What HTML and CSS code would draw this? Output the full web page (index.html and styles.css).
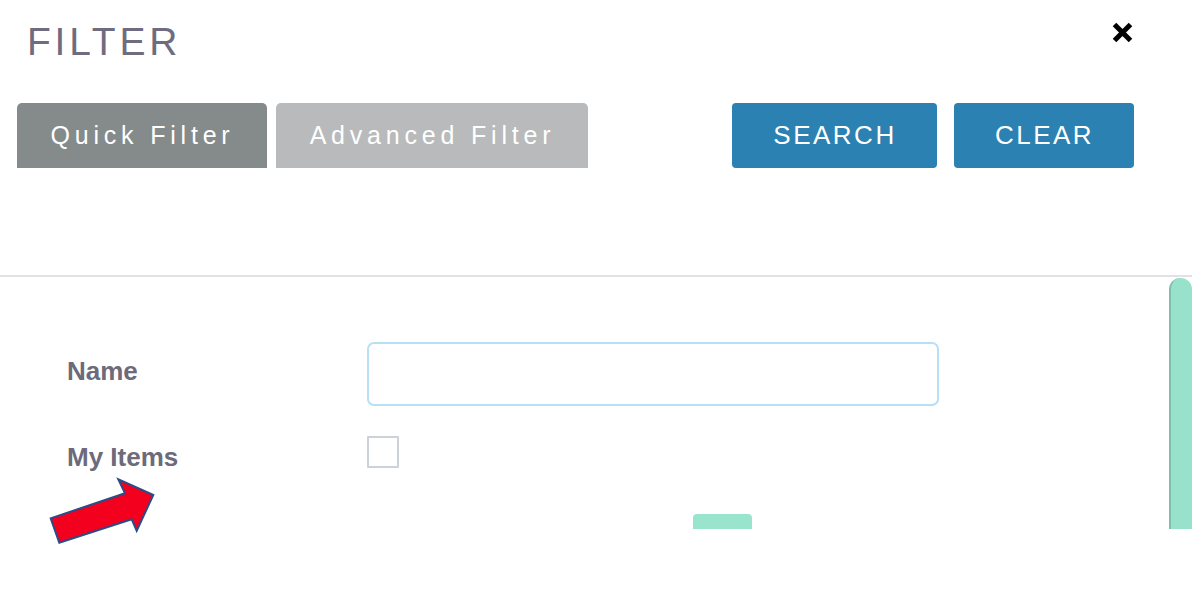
FILE: index.html
```html
<!DOCTYPE html>
<html lang="en">
<head>
<meta charset="utf-8">
<title>Filter</title>
<link rel="stylesheet" href="styles.css">
</head>
<body>
<div class="page">
  <header class="head">
    <div class="title-row">
      <h1 class="title">FILTER</h1>
      <button class="close" aria-label="Close">
        <svg viewBox="0 0 21 21" width="21" height="21"><path d="M2.5 2.5 L18.5 18.5 M18.5 2.5 L2.5 18.5" stroke="#000" stroke-width="5" fill="none"/></svg>
      </button>
    </div>
    <div class="toolbar">
      <div class="tabs">
        <button class="tab tab-active">Quick Filter</button>
        <button class="tab">Advanced Filter</button>
      </div>
      <div class="actions">
        <button class="btn btn-search">SEARCH</button>
        <button class="btn btn-clear">CLEAR</button>
      </div>
    </div>
  </header>
  <div class="body">
    <div class="form">
      <div class="row row-input">
        <label class="label">Name</label>
        <input class="text-input" type="text">
      </div>
      <div class="row row-check">
        <label class="label">My Items</label>
        <span class="checkbox"></span>
      </div>
      <div class="row row-toggle">
        <span class="label"></span>
        <span class="toggle"><span class="knob"></span></span>
      </div>
    </div>
    <div class="scrollbar"><div class="thumb"></div></div>
  </div>
  <svg class="arrow" width="120" height="80" viewBox="40 470 120 80">
    <polygon points="153.3,495 118.3,479.3 125,493.3 50.7,518.3 59.3,542.7 131.7,519.3 136.7,530.7" fill="#f2001d" stroke="#2b4c86" stroke-width="2" stroke-linejoin="miter"/>
  </svg>
</div>
</body>
</html>
```

FILE: styles.css
```css
* { box-sizing: border-box; }
html, body { margin: 0; padding: 0; background: #fff; }
body { font-family: "Liberation Sans", Arial, sans-serif; }

.page {
  position: relative;
  width: 1192px;
  height: 600px;
  overflow: hidden;
}

.head {
  height: 277px;
  border-bottom: 2px solid #e2e2e2;
  padding: 22px 58px 0 17px;
}

.title-row {
  display: flex;
  justify-content: space-between;
  align-items: flex-start;
}

.title {
  margin: 0 0 0 10px;
  font-size: 39px;
  line-height: 39px;
  font-weight: normal;
  letter-spacing: 3.8px;
  color: #6f6b80;
}

.close {
  margin: 0 1px 0 0;
  padding: 0;
  border: 0;
  background: none;
  width: 21px;
  height: 21px;
  display: block;
}
.close svg { display: block; }

.toolbar {
  margin-top: 42px;
  display: flex;
  justify-content: space-between;
}

.tabs { display: flex; gap: 9px; }

.tab {
  height: 65px;
  border: 0;
  border-radius: 5px 5px 0 0;
  background: #b9babb;
  color: #fff;
  font-family: "Liberation Sans", Arial, sans-serif;
  font-size: 25px;
  line-height: 65px;
  letter-spacing: 4.8px;
  padding: 0 0 0 1px;
  width: 312px;
}
.tab-active { background: #858a8b; width: 250px; }

.actions { display: flex; gap: 17px; }

.btn {
  height: 65px;
  border: 0;
  border-radius: 4px;
  background: #2b81b1;
  color: #fff;
  font-family: "Liberation Sans", Arial, sans-serif;
  font-size: 26px;
  line-height: 65px;
  letter-spacing: 2.5px;
  padding: 0 0 0 1px;
}
.btn-search { width: 205px; }
.btn-clear { width: 180px; }

.body {
  height: 252px;
  display: flex;
  overflow: hidden;
}

.form {
  flex: 1;
  padding: 65px 0 0 67px;
}

.row {
  display: grid;
  grid-template-columns: 300px 572px;
  align-items: start;
}

.label {
  font-size: 26px;
  line-height: 30px;
  font-weight: bold;
  color: #6c6a7b;
}

.row-input .label { padding-top: 14px; }
.row-check { margin-top: 30px; }
.row-check .label { padding-top: 6px; }
.row-toggle { margin-top: 45px; }

.text-input {
  display: block;
  width: 572px;
  height: 64px;
  border: 2px solid #b7dff5;
  border-radius: 7px;
  background: #fff;
  outline: none;
}

.checkbox {
  display: block;
  width: 32px;
  height: 32px;
  border: 2px solid #cdd1d9;
  border-radius: 1px;
}

.toggle {
  display: block;
  margin-left: 326px;
  margin-top: -3px;
  width: 59px;
  height: 32px;
  border-radius: 4px;
  background: #98e4cd;
  position: relative;
}
.knob {
  position: absolute;
  left: 20px;
  top: 15px;
  width: 25px;
  height: 14px;
  border-radius: 3px;
  background: #c8f1e4;
}

.scrollbar {
  width: 23px;
  padding-top: 1px;
}
.thumb {
  height: 400px;
  background: #98e2cb;
  border-left: 2px solid #7cc0aa;
  border-radius: 12px 12px 0 0;
}

.arrow {
  position: absolute;
  left: 40px;
  top: 470px;
}
```
